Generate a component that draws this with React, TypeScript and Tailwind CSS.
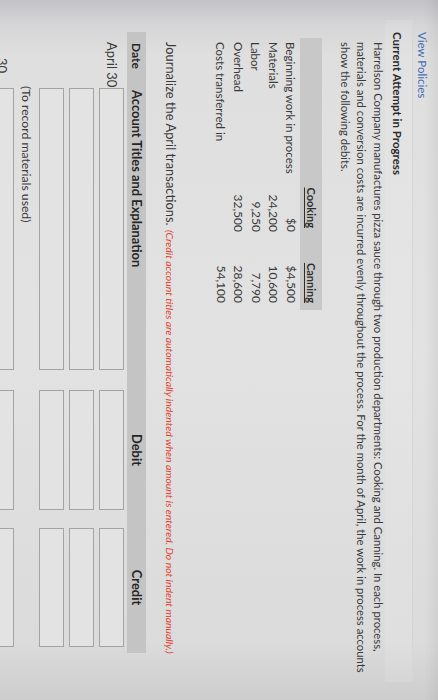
export default function App() {
  const rows = [
    { label: 'Beginning work in process', cooking: '$0', canning: '$4,500' },
    { label: 'Materials', cooking: '24,200', canning: '10,600' },
    { label: 'Labor', cooking: '9,250', canning: '7,790' },
    { label: 'Overhead', cooking: '32,500', canning: '28,600' },
    { label: 'Costs transferred in', cooking: '', canning: '54,100' },
  ];

  const cols = 'grid grid-cols-[56px_282px_20px_120px_18px_119px]';
  const box = 'h-full border border-[#a3a3a3] bg-[#e3e3e3]';

  return (
    <div className="relative h-[700px] w-[438px] overflow-hidden bg-[#d9d9d9]">
      {/* the photo is taken sideways, so the page is drawn landscape and turned */}
      <div className="h-[438px] w-[700px] origin-top-left translate-x-[438px] rotate-90 bg-[linear-gradient(to_bottom,rgba(0,0,0,0.05)_0px,rgba(0,0,0,0)_14px),linear-gradient(to_right,#c3c2c7_0px,#d6d6d8_26px,#dfdfdf_55px,#e2e2e2_50%,#dbdbdb_92%,#cdcdcd_100%)] font-['Lato',sans-serif] text-[#3a3a3a]">
        <div className="pl-[32px]">
          <div className="pt-[7.5px] text-[11.5px] leading-[16px] text-[#3f6cb3]">View Policies</div>

          <div className="-ml-[12px] mt-[1px] w-[662px] border-t border-[#d6d6d6] bg-white/10 pb-[4px] pl-[12px] pt-[7px]">
            <div className="text-[11.5px] font-bold leading-[16px] text-[#2a2a2a]">Current Attempt in Progress</div>
          </div>

          <p className="mt-[-0.5px] whitespace-nowrap pl-[10px] text-[11.3px] leading-[16.5px]">
            Harrelson Company manufactures pizza sauce through two production departments: Cooking and Canning. In each process,
            <br />
            materials and conversion costs are incurred evenly throughout the process. For the month of April, the work in process accounts
            <br />
            show the following debits.
          </p>

          {/* department debits */}
          <div className="ml-[6px] mt-[14.75px] w-[272px] text-[11.5px]">
            <div className="grid h-[22px] grid-cols-[124px_66px_71px] items-center bg-[#c8c8c8] pl-[4px] pr-[7px] text-[11px] font-bold text-[#2e2e2e]">
              <span />
              <span className="pr-[4px] text-right">
                <span className="underline underline-offset-2">Cooking</span>
              </span>
              <span className="text-right">
                <span className="underline underline-offset-2">Canning</span>
              </span>
            </div>
            {rows.map((r) => (
              <div key={r.label} className="grid h-[17.5px] grid-cols-[124px_66px_71px] items-center pl-[4px] pr-[7px]">
                <span className="whitespace-nowrap">{r.label}</span>
                <span className="text-right text-[12px]">{r.cooking}</span>
                <span className="text-right text-[12px]">{r.canning}</span>
              </div>
            ))}
          </div>

          <p className="mt-[33.5px] flex items-baseline whitespace-nowrap pl-[10px] leading-[16px]">
            <span className="w-[188px] text-[12.9px]">Journalize the April transactions.</span>
            <span className="text-[10.4px] italic text-[#e5412f]">
              (Credit account titles are automatically indented when amount is entered. Do not indent manually.)
            </span>
          </p>

          {/* journal entry grid */}
          <div className="mt-[16px] w-[621px] text-[12.2px]">
            <div className={`${cols} h-[19px] items-center bg-[#c4c4c4] text-[12.9px] font-bold text-[#262626]`}>
              <span className="whitespace-nowrap pl-[11px] text-[12px]">Date</span>
              <span className="whitespace-nowrap pl-[2px]">Account Titles and Explanation</span>
              <span />
              <span className="text-center">Debit</span>
              <span />
              <span className="text-center">Credit</span>
            </div>

            <div className="mt-[3px] flex flex-col gap-[5px]">
              {[0, 1, 2].map((i) => (
                <div key={i} className={`${cols} h-[25px] items-center`}>
                  <span className="whitespace-nowrap pl-[10px] text-[13px]">{i === 0 ? 'April 30' : ''}</span>
                  <div className={box} />
                  <span />
                  <div className={box} />
                  <span />
                  <div className={box} />
                </div>
              ))}
            </div>

            <div className="mt-[4.5px] grid grid-cols-[54px_282px] leading-[16px]">
              <span />
              <span className="whitespace-nowrap">(To record materials used)</span>
            </div>

            <div className={`${cols} mt-[4.5px] h-[25px] items-center`}>
              <span className="whitespace-nowrap pl-[26px] text-[13px]">30</span>
              <div className={box} />
              <span />
              <div className={box} />
              <span />
              <div className={box} />
            </div>
          </div>
        </div>
      </div>
    </div>
  );
}
